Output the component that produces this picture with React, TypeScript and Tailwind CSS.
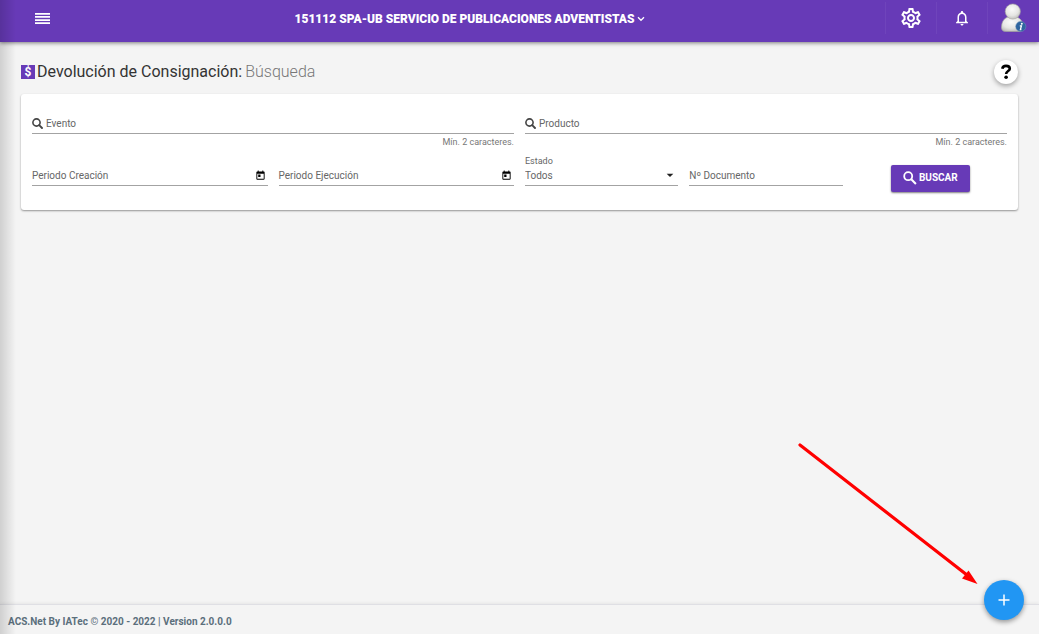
import { useState } from 'react';
import type { ReactNode } from 'react';
import { MdArrowDropDown, MdNotificationsNone, MdOutlineSettings, MdToday } from 'react-icons/md';

const MenuIcon = () => (
  <svg viewBox="0 0 15 11" className="w-[15px] h-[11px]" fill="currentColor" aria-hidden="true">
    <path d="M0 0h15v1.7H0zM0 3.1h15v1.7H0zM0 6.2h15v1.7H0zM0 9.3h15V11H0z" />
  </svg>
);

const LensIcon = () => (
  <svg viewBox="0 0 11 11" className="w-[11px] h-[11px] shrink-0 text-[#444]" fill="none" stroke="currentColor" aria-hidden="true">
    <circle cx="4.5" cy="4.5" r="3.6" strokeWidth="1.6" />
    <path d="M7.2 7.2l2.8 2.8" strokeWidth="1.9" strokeLinecap="round" />
  </svg>
);

const SearchIcon = () => (
  <svg viewBox="0 0 14 14" className="w-[14px] h-[14px]" fill="none" stroke="currentColor" aria-hidden="true">
    <circle cx="5.2" cy="5.2" r="4" strokeWidth="1.8" />
    <path d="M8.3 8.3l4.6 4.6" strokeWidth="2.1" />
  </svg>
);

const AvatarIcon = () => (
  <svg viewBox="0 0 27 30" className="w-[27px] h-[30px]" aria-hidden="true">
    <defs>
      <radialGradient id="skin" cx="0.45" cy="0.35" r="0.7">
        <stop offset="0" stopColor="#fbfbfa" />
        <stop offset="0.6" stopColor="#e6e6e4" />
        <stop offset="1" stopColor="#b9b9b5" />
      </radialGradient>
    </defs>
    <path d="M1.5 24.5C1.5 18 5 14.5 8.5 14h8c4 1 6.5 5 6.5 10.5c0 2.5-1.5 4-4 4H5.5c-2.5 0-4-1.5-4-4z" fill="url(#skin)" stroke="#a3a3a0" strokeWidth="0.7" />
    <circle cx="12.8" cy="8.5" r="7.6" fill="url(#skin)" stroke="#a3a3a0" strokeWidth="0.6" />
    <circle cx="20.8" cy="23.5" r="5.1" fill="#2f659f" stroke="#6d93ba" strokeWidth="0.5" />
    <circle cx="21.8" cy="20.7" r="1" fill="#fff" />
    <path d="M19.8 22.8h1.6l-1 3.7h1" fill="none" stroke="#fff" strokeWidth="1.3" />
  </svg>
);

type FieldProps = {
  id: string;
  label: string;
  before?: ReactNode;
  after?: ReactNode;
  hint?: string;
};

const Field = ({ id, label, before, after, hint }: FieldProps) => (
  <div className="min-w-0">
    <div className="flex items-center h-[19px] pb-[2px] border-b border-[#a3a3a3]">
      {before}
      <label htmlFor={id} className={before ? 'ml-[3px] whitespace-nowrap' : 'whitespace-nowrap'}>
        {label}
      </label>
      <input id={id} type="text" className="flex-1 min-w-0 ml-1 bg-transparent outline-none" />
      {after}
    </div>
    {hint && <p className="text-right text-[9px] leading-4 text-[#777]">{hint}</p>}
  </div>
);

const CalendarButton = ({ label }: { label: string }) => (
  <button type="button" aria-label={label} className="mr-[2px] text-black">
    <MdToday className="w-[11px] h-[11px]" />
  </button>
);

const Header = () => (
  <header className="relative z-10 flex items-center h-[42px] bg-[#673ab7] text-white shadow-[0_1px_4px_rgba(0,0,0,0.5)]">
    <button type="button" aria-label="Menú" className="ml-[31px] mb-[5px] px-1">
      <MenuIcon />
    </button>
    <div className="flex-1 flex justify-center min-w-0 mb-[4px]">
      <button type="button" className="flex items-center text-[12px] leading-4 font-black whitespace-nowrap">
        151112 SPA-UB SERVICIO DE PUBLICACIONES ADVENTISTAS
        <svg viewBox="0 0 8 6" className="w-2 h-[6px] ml-[2px]" fill="none" stroke="currentColor" strokeWidth="1.3" aria-hidden="true">
          <path d="M1 1.3l3 3 3-3" />
        </svg>
      </button>
    </div>
    <nav className="flex self-start pt-[2px]">
      <button type="button" aria-label="Configuración" className="flex items-center justify-center w-[51px] h-8 border-l border-white/5">
        <MdOutlineSettings className="w-[24px] h-[24px]" />
      </button>
      <button type="button" aria-label="Notificaciones" className="flex items-center justify-center w-[51px] h-8 border-l border-white/5">
        <MdNotificationsNone className="w-[18px] h-[18px]" />
      </button>
      <button type="button" aria-label="Usuario" className="flex items-center justify-center w-[52px] h-8 border-l border-white/5">
        <AvatarIcon />
      </button>
    </nav>
  </header>
);

const App = () => {
  const [status, setStatus] = useState('todos');

  return (
    <div className="relative flex flex-col min-h-screen overflow-hidden bg-[#f4f4f4] font-[Roboto,sans-serif] text-[10px] text-[#666]">
      <Header />

      <main className="flex-1 px-[21px] pt-[18px]">
        <div className="flex items-center justify-between h-6 mb-[10px]">
          <h1 className="flex items-center text-[16px] leading-6 text-[#333]">
            <span className="flex items-center justify-center w-[14px] h-[14px] mr-[2px] bg-[#673ab7] text-white text-[12px] leading-none font-bold">
              $
            </span>
            Devolución de Consignación:
            <span className="ml-[3px] font-light text-[#777]">Búsqueda</span>
          </h1>
          <button
            type="button"
            aria-label="Ayuda"
            className="flex items-center justify-center w-6 h-6 rounded-full bg-white text-black shadow-[0_2px_5px_rgba(0,0,0,0.35)]"
          >
            <svg viewBox="0 0 12 16" className="w-3 h-4" fill="none" aria-hidden="true">
              <path d="M2.3 4.7C2.6 2.7 4 1.9 6 1.9c2.2 0 3.8 1.1 3.8 2.9C9.8 7.1 6.1 7 6.1 10" stroke="currentColor" strokeWidth="2.6" />
              <circle cx="6.1" cy="13.3" r="1.8" fill="currentColor" />
            </svg>
          </button>
        </div>

        <form
          className="px-[11px] pt-[21px] pb-[18px] rounded-[3px] bg-white shadow-[0_1px_2px_rgba(0,0,0,0.4)]"
          onSubmit={(e) => e.preventDefault()}
        >
          <div className="grid grid-cols-2 gap-x-[11px]">
            <Field id="evento" label="Evento" before={<LensIcon />} hint="Mín. 2 caracteres." />
            <Field id="producto" label="Producto" before={<LensIcon />} hint="Mín. 2 caracteres." />
          </div>

          <div className="grid grid-cols-2 gap-x-[11px] mt-[5px]">
            <div className="grid grid-cols-2 gap-x-[11px] pt-3">
              <Field id="creacion" label="Periodo Creación" after={<CalendarButton label="Elegir periodo de creación" />} />
              <Field id="ejecucion" label="Periodo Ejecución" after={<CalendarButton label="Elegir periodo de ejecución" />} />
            </div>
            <div className="grid grid-cols-3 items-start gap-x-[11px]">
              <div>
                <label htmlFor="estado" className="block text-[9px] leading-3">
                  Estado
                </label>
                <div className="relative flex items-center h-[19px] pb-[2px] border-b border-[#a3a3a3]">
                  <select
                    id="estado"
                    value={status}
                    onChange={(e) => setStatus(e.target.value)}
                    className="w-full appearance-none bg-transparent outline-none"
                  >
                    <option value="todos">Todos</option>
                    <option value="abierto">Abierto</option>
                    <option value="cerrado">Cerrado</option>
                  </select>
                  <MdArrowDropDown className="absolute right-0 w-4 h-4 text-[#222] pointer-events-none" />
                </div>
              </div>
              <div className="pt-3">
                <Field id="documento" label="Nº Documento" />
              </div>
              <button
                type="submit"
                className="flex items-center justify-center justify-self-center gap-[2px] w-[79px] h-[27px] mt-[10px] pb-[2px] rounded-[2px] bg-[#673ab7] text-white font-bold shadow-[0_1px_2px_rgba(0,0,0,0.5)]"
              >
                <SearchIcon />
                BUSCAR
              </button>
            </div>
          </div>
        </form>
      </main>

      <footer className="flex items-center h-[30px] pt-[3px] px-2 border-t border-[#dfdfe4] shadow-[0_-1px_3px_rgba(0,0,0,0.06)] font-bold text-[#5b6f7c]">
        ACS.Net By IATec © 2020 - 2022 | Version 2.0.0.0
      </footer>

      {/* shadow cast by the collapsed side menu */}
      <div className="absolute inset-y-0 left-0 z-20 w-4 bg-linear-to-r from-black/15 to-transparent pointer-events-none" />

      <svg
        viewBox="0 0 180 142"
        className="absolute right-[61px] bottom-[50px] w-[180px] h-[142px] pointer-events-none"
        aria-hidden="true"
      >
        <path d="M2 3l167 130" stroke="#f00" strokeWidth="3.2" strokeLinecap="round" />
        <path d="M179.500 142l-15.500-5.500 6.500-8z" fill="#f00" />
      </svg>

      <button
        type="button"
        aria-label="Agregar"
        className="absolute right-[15px] bottom-[14px] flex items-center justify-center w-10 h-10 rounded-full bg-[#2196f3] text-white shadow-[0_2px_5px_rgba(0,0,0,0.4)]"
      >
        <svg viewBox="0 0 12 12" className="w-3 h-3" stroke="currentColor" strokeWidth="1.5" aria-hidden="true">
          <path d="M6 .5v11M.5 6h11" />
        </svg>
      </button>
    </div>
  );
};

export default App;
